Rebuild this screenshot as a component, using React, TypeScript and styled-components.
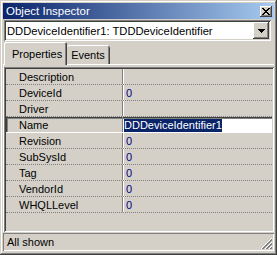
import React from "react";
import styled, { createGlobalStyle } from "styled-components";

const GlobalStyle = createGlobalStyle`
  html, body {
    margin: 0;
    padding: 0;
    background: #d4d0c8;
  }
  body {
    font-family: "Liberation Sans", Arial, sans-serif;
    font-size: 11px;
    color: #000;
  }
`;

const Window = styled.div`
  width: 277px;
  height: 255px;
  box-sizing: border-box;
  padding: 3px;
  background: #d4d0c8;
  box-shadow: inset -1px -1px 0 #404040, inset 1px 1px 0 #d4d0c8,
    inset -2px -2px 0 #808080, inset 2px 2px 0 #ffffff;
  display: flex;
  flex-direction: column;
`;

const TitleBar = styled.div`
  height: 16px;
  flex: none;
  display: flex;
  align-items: center;
  justify-content: space-between;
  padding: 0 2px 0 3px;
  background: linear-gradient(to right, #0a246a, #a6caf0);
  color: #fff;
  font-size: 11.5px;
`;

const RaisedButton = styled.div<{ $w: number; $h: number }>`
  width: ${(p) => p.$w}px;
  height: ${(p) => p.$h}px;
  box-sizing: border-box;
  flex: none;
  display: flex;
  align-items: center;
  justify-content: center;
  background: #d4d0c8;
  box-shadow: inset -1px -1px 0 #404040, inset 1px 1px 0 #ffffff,
    inset -2px -2px 0 #808080;
`;

const Combo = styled.div`
  height: 21px;
  flex: none;
  box-sizing: border-box;
  margin: 1px 3px 0 1px;
  padding: 2px;
  display: flex;
  align-items: center;
  background: #fff;
  box-shadow: inset 1px 1px 0 #808080, inset -1px -1px 0 #ffffff,
    inset 2px 2px 0 #404040, inset -2px -2px 0 #d4d0c8;
`;

const ComboText = styled.span`
  flex: 1;
  padding-left: 1px;
  white-space: nowrap;
  overflow: hidden;
  font-size: 11.2px;
`;

const Tabs = styled.div`
  height: 22px;
  flex: none;
  margin-top: 1px;
  padding-left: 1px;
  display: flex;
  align-items: flex-end;
`;

const Tab = styled.div<{ $active?: boolean }>`
  box-sizing: border-box;
  height: ${(p) => (p.$active ? 23 : 19)}px;
  margin-bottom: ${(p) => (p.$active ? -1 : 0)}px;
  padding: ${(p) => (p.$active ? "0 5px 0 8px" : "0 5px 0 4px")};
  position: relative;
  z-index: ${(p) => (p.$active ? 1 : 0)};
  display: flex;
  align-items: center;
  background: #d4d0c8;
  border-top-left-radius: 2px;
  border-top-right-radius: 2px;
  box-shadow: ${(p) =>
    p.$active
      ? "inset 1px 1px 0 #ffffff, inset -1px 0 0 #404040, inset -2px 0 0 #808080"
      : "inset 0 1px 0 #ffffff, inset -1px 0 0 #404040, inset -2px 0 0 #808080"};
`;

const Page = styled.div`
  flex: 1;
  min-height: 0;
  display: flex;
  flex-direction: column;
  padding: 3px 0 0 1px;
  box-shadow: inset 1px 1px 0 #ffffff;
`;

const Grid = styled.div`
  flex: 1;
  box-sizing: border-box;
  padding: 2px;
  box-shadow: inset 1px 1px 0 #808080, inset -1px -1px 0 #ffffff,
    inset 2px 2px 0 #404040, inset -2px -2px 0 #d4d0c8;
`;

const Row = styled.div<{ $selected?: boolean }>`
  height: 16px;
  box-sizing: border-box;
  display: flex;
  border-bottom: 1px dotted #808080;
  ${(p) =>
    p.$selected &&
    `
    border-bottom: 1px solid #ffffff;
    box-shadow: inset 1px 1px 0 #404040, inset 2px 2px 0 #808080;
  `}
`;

const NameCell = styled.div`
  width: 117px;
  flex: none;
  box-sizing: border-box;
  padding-left: 13px;
  display: flex;
  align-items: center;
  border-right: 1px solid #808080;
  white-space: nowrap;
`;

const ValueCell = styled.div<{ $edit?: boolean }>`
  flex: 1;
  display: flex;
  align-items: center;
  padding-left: 2px;
  border-left: 1px solid #ffffff;
  color: #000080;
  ${(p) =>
    p.$edit &&
    `
    margin-top: 2px;
    border-left: none;
    padding-left: 1px;
    background: #ffffff;
  `}
`;

const Selected = styled.span`
  background: #0a246a;
  color: #fff;
  line-height: 13px;
`;

const StatusBar = styled.div`
  height: 18px;
  flex: none;
  box-sizing: border-box;
  margin: 1px 0 1px 0;
  padding: 0 1px 0 4px;
  display: flex;
  align-items: center;
  justify-content: space-between;
  box-shadow: inset 1px 1px 0 #808080, inset -1px -1px 0 #ffffff;
`;

const Grip = styled.svg`
  align-self: flex-end;
  margin-bottom: 1px;
`;

const rows: { name: string; value: string; selected?: boolean }[] = [
  { name: "Description", value: "" },
  { name: "DeviceId", value: "0" },
  { name: "Driver", value: "" },
  { name: "Name", value: "DDDeviceIdentifier1", selected: true },
  { name: "Revision", value: "0" },
  { name: "SubSysId", value: "0" },
  { name: "Tag", value: "0" },
  { name: "VendorId", value: "0" },
  { name: "WHQLLevel", value: "0" },
];

export default function App() {
  return (
    <>
      <GlobalStyle />
      <Window>
        <TitleBar>
          <span>Object Inspector</span>
          <RaisedButton $w={12} $h={11}>
            <svg width="8" height="7" viewBox="0 0 8 7">
              <path
                d="M0 0h2v1h1v1h2V1h1V0h2v1H7v1H6v1H5v1h1v1h1v1h1v1H6V6H5V5H3v1H2v1H0V6h1V5h1V4h1V3H2V2H1V1H0z"
                fill="#000"
              />
            </svg>
          </RaisedButton>
        </TitleBar>
        <Combo>
          <ComboText>DDDeviceIdentifier1: TDDDeviceIdentifier</ComboText>
          <RaisedButton $w={16} $h={17}>
            <svg width="7" height="4" viewBox="0 0 7 4">
              <path d="M0 0h7v1H6v1H5v1H4v1H3V3H2V2H1V1H0z" fill="#000" />
            </svg>
          </RaisedButton>
        </Combo>
        <Tabs>
          <Tab $active>Properties</Tab>
          <Tab>Events</Tab>
        </Tabs>
        <Page>
          <Grid>
            {rows.map((r) => (
              <Row key={r.name} $selected={r.selected}>
                <NameCell>{r.name}</NameCell>
                <ValueCell $edit={r.selected}>
                  {r.selected ? <Selected>{r.value}</Selected> : r.value}
                </ValueCell>
              </Row>
            ))}
          </Grid>
        </Page>
        <StatusBar>
          <span>All shown</span>
          <Grip width="12" height="12" viewBox="0 0 12 12">
            <path d="M11 1L1 11M11 5L5 11M11 9L9 11" stroke="#808080" strokeWidth="1" />
            <path d="M11 2L2 11M11 6L6 11M11 10L10 11" stroke="#808080" strokeWidth="1" />
            <path d="M11 0L0 11M11 4L4 11M11 8L8 11" stroke="#ffffff" strokeWidth="1" />
          </Grip>
        </StatusBar>
      </Window>
    </>
  );
}
